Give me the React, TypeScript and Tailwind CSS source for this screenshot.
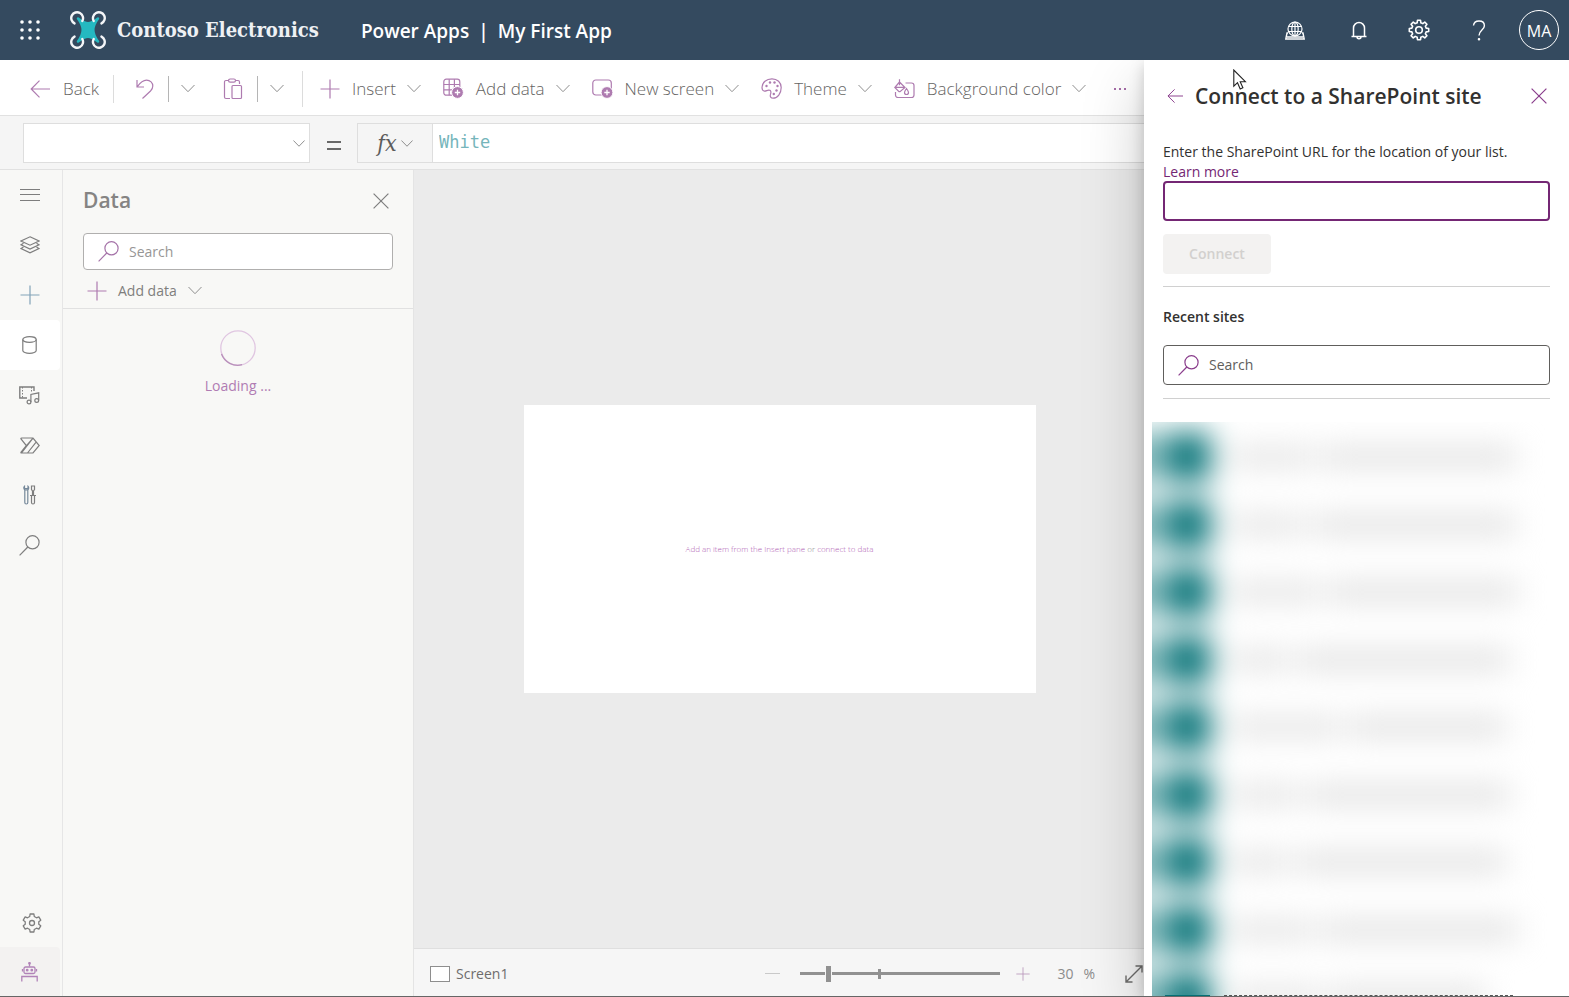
import React from "react";

type IconProps = { className?: string };

function Svg({ w, h, className = "", children }: { w: number; h: number; className?: string; children: React.ReactNode }) {
  return (
    <svg
      width={w}
      height={h}
      viewBox={`0 0 ${w} ${h}`}
      fill="none"
      stroke="currentColor"
      strokeWidth="1.2"
      className={`shrink-0 ${className}`}
      aria-hidden="true"
    >
      {children}
    </svg>
  );
}

const Chevron = ({ className }: IconProps) => (
  <Svg w={14} h={9} className={className}>
    <path d="M.5 1 7 7.700 13.500 1" strokeWidth="1" />
  </Svg>
);
const ArrowLeft = ({ className }: IconProps) => (
  <Svg w={20} h={18} className={className}>
    <path d="M20 9H1.200M9.500.7 1.200 9l8.300 8.300" />
  </Svg>
);
const Plus = ({ className }: IconProps) => (
  <Svg w={20} h={20} className={className}>
    <path d="M10 .5v19M.5 10h19" />
  </Svg>
);
const Close = ({ className }: IconProps) => (
  <Svg w={16} h={16} className={className}>
    <path d="m.6.6 14.800 14.800M15.400.6.6 15.400" />
  </Svg>
);
const Magnifier = ({ className }: IconProps) => (
  <Svg w={21} h={21} className={className}>
    <circle cx="13.500" cy="7.300" r="6.600" />
    <path d="M8.800 12 .6 20.300" />
  </Svg>
);
const Undo = () => (
  <Svg w={18} h={20} className="text-[#ae7bb0]">
    <path d="M1 1v7h7M1.300 7.700C4 4 6.500 1.200 10.500 1.200c3.800 0 6.300 2.600 6.300 5.800 0 2-.8 3.500-2.300 5L6.500 19.500" />
  </Svg>
);
const Paste = () => (
  <Svg w={20} h={22} className="text-[#ae7bb0]">
    <path d="M7 20.500H3a1.500 1.500 0 0 1-1.500-1.500V4A1.500 1.500 0 0 1 3 2.500h2.500M12.500 2.500H15A1.500 1.500 0 0 1 16.500 4v2" />
    <rect x="5.500" y="1" width="7" height="3.200" rx="1.600" />
    <rect x="9" y="7.500" width="9.500" height="13" rx="1" />
  </Svg>
);
const Badge = ({ x, y }: { x: number; y: number }) => (
  <g>
    <circle cx={x} cy={y} r="5.900" fill="currentColor" stroke="white" strokeWidth="1" />
    <path d={`M${x} ${y - 2.7}v5.400M${x - 2.7} ${y}h5.400`} stroke="white" strokeWidth="1.300" />
  </g>
);
const TableAdd = () => (
  <Svg w={21} h={21} className="text-[#ae7bb0]">
    <rect x=".8" y="1.200" width="16" height="16" rx="2.500" />
    <path d="M6.200 1.200v16M11.400 1.200v16M.8 6.500h16M.8 11.800h16" />
    <Badge x={14.5} y={14.5} />
  </Svg>
);
const ScreenAdd = () => (
  <Svg w={21} h={20} className="text-[#ae7bb0]">
    <rect x=".8" y="1" width="18.500" height="15" rx="3" />
    <Badge x={15} y={13.5} />
  </Svg>
);
const Palette = () => (
  <Svg w={21} h={21} className="text-[#ae7bb0]">
    <path d="M1 9.500C1 4.500 5.500.8 11 .8c5.300 0 9.200 3.700 9.200 8.700 0 6-3.700 10.700-8 10.700-2.400 0-3.400-1.700-2.700-3.800.7-2.300.6-3.900-1.200-4.200-2-.4-3.200 1.300-4.900.9C1.800 12.700 1 11.400 1 9.500z" />
    <g fill="currentColor" stroke="none">
      <circle cx="5.500" cy="8" r="1.200" />
      <circle cx="9" cy="4.500" r="1.200" />
      <circle cx="13.500" cy="4.500" r="1.200" />
      <circle cx="16.500" cy="8" r="1.200" />
      <circle cx="15.500" cy="12.500" r="1.200" />
      <circle cx="12.800" cy="16" r="1.200" />
    </g>
  </Svg>
);
const PaintFill = () => (
  <Svg w={21} h={20} className="text-[#ae7bb0]">
    <path d="M11.500 4h6a2.500 2.500 0 0 1 2.500 2.500V16a2.500 2.500 0 0 1-2.500 2.500H4A2.500 2.500 0 0 1 1.500 16v-3" />
    <path d="m5.500 3 5.500 5.500-5 4.200h-1L.8 8.500zM5.500.3v6M1 8.300h10" />
    <path d="M12.500 9.500c-1.600 2.300-2 3.200-2 4a2 2 0 0 0 4 0c0-.8-.4-1.700-2-4z" />
  </Svg>
);

const ROTOR = "M13.300 10A5.900 5.900 0 1 0 5.500 12.400";
const Logo = () => (
  <svg width="38" height="38" viewBox="0 0 38 38" fill="none" className="shrink-0" aria-hidden="true">
    <path
      d="M9 7.500c4 3 6 4.800 10 4.800s6-1.800 10-4.800c-3 4-4.700 7-4.700 11.500S26 26.500 29 30.500c-4-3-6-4.800-10-4.800s-6 1.800-10 4.800c3-4 4.700-7 4.700-11.500S12 11.500 9 7.500z"
      fill="#25b9c1"
      stroke="#25b9c1"
      strokeWidth="2.500"
      strokeLinejoin="round"
    />
    <g stroke="#f4f6f8" strokeWidth="2.400" strokeLinecap="round">
      <path d={ROTOR} />
      <path d={ROTOR} transform="matrix(-1 0 0 1 38 0)" />
      <path d={ROTOR} transform="matrix(1 0 0 -1 0 38)" />
      <path d={ROTOR} transform="matrix(-1 0 0 -1 38 38)" />
    </g>
  </svg>
);

const gearPath = (teeth: number, c: number, outer: number, inner: number) => {
  const pts: string[] = [];
  const step = (Math.PI * 2) / teeth;
  for (let i = 0; i < teeth; i++) {
    const a = i * step - Math.PI / 2;
    [
      [a - step * 0.32, inner],
      [a - step * 0.2, outer],
      [a + step * 0.2, outer],
      [a + step * 0.32, inner],
    ].forEach(([t, r]) => pts.push(`${(c + Math.cos(t) * r).toFixed(2)} ${(c + Math.sin(t) * r).toFixed(2)}`));
  }
  return `M${pts.join("L")}z`;
};

const GearEight = () => (
  <Svg w={22} h={22}>
    <path d={gearPath(8, 11, 9.8, 7.4)} strokeWidth="1.600" strokeLinejoin="round" />
    <circle cx="11" cy="11" r="3.300" strokeWidth="1.600" />
  </Svg>
);
const GearSix = () => (
  <Svg w={20} h={20}>
    <path d={gearPath(6, 10, 9.2, 6.9)} strokeWidth="1.300" strokeLinejoin="round" />
    <circle cx="10" cy="10" r="2.500" strokeWidth="1.300" />
  </Svg>
);
const Globe = () => (
  <Svg w={20} h={19}>
    <circle cx="10" cy="8" r="7" />
    <ellipse cx="10" cy="8" rx="3.200" ry="7" />
    <path d="M3.500 5.500h13M3.500 10.500h13M10 1v14" />
    <path d="M3 12H2L.8 18h18.400L18 12h-1M2 16h16" strokeWidth="1.400" />
  </Svg>
);
const Bell = () => (
  <Svg w={16} h={19}>
    <path d="M.5 15.500h15M2.500 15.500V7a5.500 5.500 0 0 1 11 0v8.500M6 15.800a2 2 0 0 0 4 0" strokeWidth="1.500" />
  </Svg>
);
const Question = () => (
  <Svg w={14} h={21}>
    <path d="M1.500 5.500C1.800 2.700 4 1 7 1c3.300 0 5.400 2 5.400 4.700C12.400 10 7 10.200 7 15.500" strokeWidth="1.400" />
    <circle cx="7" cy="19.200" r=".7" fill="currentColor" />
  </Svg>
);

const Menu = () => (
  <Svg w={20} h={12}>
    <path d="M0 .5h20M0 5.500h20M0 11.500h20" strokeWidth="1" />
  </Svg>
);
const Layers = () => (
  <Svg w={20} h={18}>
    <path d="M10 .8 19 5l-9 4.200L1 5z" />
    <path d="M3.500 7.200 1 8.800l9 4.200 9-4.200-2.500-1.600M3.500 11 1 12.600l9 4.200 9-4.200-2.500-1.600" />
  </Svg>
);
const Cylinder = () => (
  <Svg w={15} h={18}>
    <ellipse cx="7.500" cy="3.500" rx="6.700" ry="2.800" />
    <path d="M.8 3.500v11c0 1.500 3 2.800 6.700 2.800s6.700-1.300 6.700-2.800v-11" />
  </Svg>
);
const Media = () => (
  <Svg w={21} h={19}>
    <path d="M15 5V1H.8v11H8" strokeWidth="1.400" />
    <path d="M3.500 1v11M12.500 1v5" strokeWidth="1" strokeDasharray="1.500 1.500" />
    <circle cx="10" cy="16" r="1.900" />
    <circle cx="17.700" cy="14.500" r="1.900" />
    <path d="M11.900 16V8.500l7.800-1.700v7.700" />
  </Svg>
);
const Flow = () => (
  <Svg w={20} h={17}>
    <path d="M1.500 1h11.500l6.200 7.500-6.200 7.500H1.500q-1 0-.4-1L6.300 8.500 1 2q-.4-1 .5-1zM13 1.200 6.700 8.500M13 1.200 1.500 15.800M16.300 4.800 7.500 16" />
  </Svg>
);
const Tools = () => (
  <Svg w={13} h={20}>
    <path d="M1.800 5v12.500a1.500 1.500 0 0 0 3 0V5M1.500 1.200C.5 2 .5 4 1.800 5h3C6 4 6 2 5 1.200v2.500H1.500z" stroke="#76899a" />
    <path d="M8.500 1h3v3.500L10.500 6v4.500h-1V6l-1-1.500zM7 10.500h6M8.500 10.500v7a1.500 1.500 0 0 0 3 0v-7" />
  </Svg>
);
const Bot = () => (
  <Svg w={17} h={20}>
    <path d="M8.500 4.500V1" strokeWidth="1.300" />
    <circle cx="8.500" cy="1.300" r=".8" />
    <rect x="3" y="5" width="11" height="6.500" rx="1.500" strokeWidth="1.300" />
    <path d="M1.500 7v2.500M15.500 7v2.500M.8 19.500v-5h15.400v5" strokeWidth="1.300" />
    <circle cx="6.200" cy="8.200" r=".8" fill="currentColor" />
    <circle cx="10.800" cy="8.200" r=".8" fill="currentColor" />
  </Svg>
);
const Expand = () => (
  <Svg w={18} h={18}>
    <path d="M1 17 17 1M10.500 1H17v6.500M1 10.500V17h6.500" strokeWidth="1.400" />
  </Svg>
);

function ToolButton({ icon, label }: { icon: React.ReactNode; label: string }) {
  return (
    <button type="button" className="flex shrink-0 items-center gap-3">
      {icon}
      <span className="flex items-center gap-[11px] whitespace-nowrap">
        {label}
        <Chevron className="text-[#8f8f8f]" />
      </span>
    </button>
  );
}

function TopBar() {
  return (
    <header className="flex h-[60px] shrink-0 items-center bg-[#344a5f] text-white">
      <button type="button" aria-label="App launcher" className="ml-5">
        <svg width="20" height="20" viewBox="0 0 20 20" fill="currentColor" aria-hidden="true">
          {[2, 10, 18].map((y) => [2, 10, 18].map((x) => <circle key={`${x}-${y}`} cx={x} cy={y} r="1.800" />))}
        </svg>
      </button>
      <a href="#home" className="ml-[29px] flex items-center gap-[10px]">
        <Logo />
        <span className="font-['DejaVu_Serif_Condensed','DejaVu_Serif',serif] text-[20px] font-bold text-[#eef1f4]">
          Contoso Electronics
        </span>
      </a>
      <h1 className="ml-[42px] flex gap-[9px] pt-[2px] text-[19px] font-semibold">
        <span>Power Apps</span>
        <span>|</span>
        <span>My First App</span>
      </h1>
      <nav className="ml-auto mr-[10px] flex items-center">
        <button type="button" aria-label="Environment" className="flex w-16 justify-center"><Globe /></button>
        <button type="button" aria-label="Notifications" className="flex w-16 justify-center"><Bell /></button>
        <button type="button" aria-label="Settings" className="flex w-[56px] justify-center"><GearEight /></button>
        <button type="button" aria-label="Help" className="flex w-16 justify-center"><Question /></button>
        <button
          type="button"
          aria-label="Account"
          className="ml-2 flex size-10 items-center justify-center rounded-full border border-white pt-px text-base"
        >
          MA
        </button>
      </nav>
    </header>
  );
}

function Toolbar() {
  return (
    <div className="flex h-14 shrink-0 items-center overflow-hidden border-b border-[#e1e1e1] bg-white pt-[2px] text-[17px] font-light text-[#656463]">
      <button type="button" className="ml-[30px] flex items-center gap-[13px]">
        <ArrowLeft className="text-[#ae7bb0]" />
        Back
      </button>
      <span className="ml-[14px] h-7 w-px bg-[#dcdcdc]" />
      <button type="button" aria-label="Undo" className="ml-[22px]"><Undo /></button>
      <span className="ml-[14px] h-[26px] w-px bg-[#b5b5b5]" />
      <button type="button" aria-label="Undo options" className="ml-3"><Chevron className="text-[#8c8c8c]" /></button>
      <button type="button" aria-label="Paste" className="ml-[28px]"><Paste /></button>
      <span className="ml-[14px] h-[26px] w-px bg-[#b5b5b5]" />
      <button type="button" aria-label="Paste options" className="ml-3"><Chevron className="text-[#8c8c8c]" /></button>
      <span className="ml-[18px] h-[36px] w-px bg-[#dcdcdc]" />
      <div className="ml-[17px] flex items-center gap-[22px]">
        <ToolButton icon={<Plus className="text-[#ae7bb0]" />} label="Insert" />
        <ToolButton icon={<TableAdd />} label="Add data" />
        <ToolButton icon={<ScreenAdd />} label="New screen" />
        <ToolButton icon={<Palette />} label="Theme" />
        <ToolButton icon={<PaintFill />} label="Background color" />
      </div>
      <button type="button" aria-label="More" className="ml-7 flex gap-[3px]">
        <span className="size-[2px] bg-[#a56ca8]" />
        <span className="size-[2px] bg-[#a56ca8]" />
        <span className="size-[2px] bg-[#a56ca8]" />
      </button>
    </div>
  );
}

function FormulaBar() {
  return (
    <div className="flex h-[54px] shrink-0 items-center border-b border-[#e1e1e1] bg-[#f5f5f5] pt-px">
      <div className="relative ml-[23px] h-10 w-[287px]">
        <select aria-label="Property" className="size-full appearance-none border border-[#dedede] bg-white">
          <option></option>
        </select>
        <Chevron className="pointer-events-none absolute right-[5px] top-4 w-3 text-[#7c7c7c]" />
      </div>
      <span className="flex w-[47px] flex-col items-center gap-[5px] pt-1" role="img" aria-label="equals">
        <span className="h-[2px] w-[14px] bg-[#686868]" />
        <span className="h-[2px] w-[14px] bg-[#686868]" />
      </span>
      <button
        type="button"
        className="flex h-10 w-[75px] items-center justify-center gap-1 border border-r-0 border-[#dedede] font-['DejaVu_Serif_Condensed','Liberation_Serif',serif] text-[23px] leading-none italic text-[#5c5c5c]"
      >
        fx
        <Chevron className="w-3 text-[#7c7c7c]" />
      </button>
      <input
        aria-label="Formula"
        defaultValue="White"
        className="h-10 min-w-0 flex-1 border border-r-0 border-[#dedede] bg-white px-[6px] pb-[2px] font-['DejaVu_Sans_Mono',monospace] text-[17px] text-[#76b5bb] outline-none"
      />
    </div>
  );
}

const railItems = [
  { label: "Menu", icon: <Menu /> },
  { label: "Tree view", icon: <Layers /> },
  { label: "Insert", icon: <Plus className="text-[#82a3b8]" /> },
  { label: "Data", icon: <Cylinder />, active: true },
  { label: "Media", icon: <Media /> },
  { label: "Power Automate", icon: <Flow /> },
  { label: "Advanced tools", icon: <Tools /> },
  { label: "Search", icon: <Magnifier /> },
];

function Rail() {
  return (
    <nav className="flex w-[63px] shrink-0 flex-col border-r border-[#e6e6e6] text-[#7e7e7e]">
      {railItems.map((item) => (
        <button
          key={item.label}
          type="button"
          aria-label={item.label}
          className={`flex h-[50px] w-[60px] items-center justify-center rounded-r pr-px ${item.active ? "bg-white" : ""}`}
        >
          {item.icon}
        </button>
      ))}
      <button type="button" aria-label="Settings" className="mt-auto flex h-12 w-[63px] items-center justify-center">
        <GearSix />
      </button>
      <button
        type="button"
        aria-label="Virtual agent"
        className="flex h-[49px] w-[60px] items-center justify-center rounded-tr bg-[#f3f2f1] pr-px text-[#b183b8]"
      >
        <Bot />
      </button>
    </nav>
  );
}

function DataPane() {
  return (
    <section className="flex w-[351px] shrink-0 flex-col border-r border-[#e4e4e4]">
      <div className="border-b border-[#e1e1e1] px-5">
        <div className="flex h-[63px] items-center justify-between pr-1 pb-px">
          <h2 className="text-[21px] font-semibold text-[#858483]">Data</h2>
          <button type="button" aria-label="Close" className="text-[#7e7e7e]"><Close /></button>
        </div>
        <label className="flex h-[37px] items-center gap-[10px] rounded-sm border border-[#b0afae] bg-white pl-[14px]">
          <Magnifier className="text-[#a573a8]" />
          <input
            type="text"
            aria-label="Search data"
            placeholder="Search"
            className="min-w-0 flex-1 bg-transparent text-sm text-[#858483] outline-none placeholder:text-[#979695]"
          />
        </label>
        <button type="button" className="flex h-[38px] items-center gap-[11px] pt-[3px] pl-1 text-sm text-[#7f7e7d]">
          <Plus className="text-[#ae7bb0]" />
          Add data
          <Chevron className="text-[#8f8f8f]" />
        </button>
      </div>
      <div className="flex flex-col items-center pt-[21px] text-[#b07cb3]">
        <svg width="36" height="36" viewBox="0 0 36 36" fill="none" aria-hidden="true">
          <circle cx="18" cy="18" r="17.200" stroke="#e0c6e1" strokeWidth="1.300" />
          <path d="M1.500 24A17.200 17.200 0 0 0 22 34.700" stroke="#b890ba" strokeWidth="1.300" />
        </svg>
        <p className="mt-[10px] text-sm">Loading ...</p>
      </div>
    </section>
  );
}

function StatusBar() {
  return (
    <footer className="flex h-[48px] shrink-0 items-center overflow-hidden border-t border-[#dfdfdf] bg-[#f6f6f6] pt-[2px] text-sm text-[#6e6d6c]">
      <span className="ml-4 h-4 w-5 border border-[#8e8e8e] bg-white" />
      <span className="ml-[6px]">Screen1</span>
      <button type="button" aria-label="Zoom out" className="ml-auto flex h-5 w-[15px] items-center">
        <span className="h-px w-full bg-[#c9c9c9]" />
      </button>
      <div className="relative ml-5 flex h-5 w-[200px] items-center">
        <input
          type="range"
          aria-label="Zoom"
          min={0}
          max={100}
          defaultValue={13}
          className="h-[3px] w-full appearance-none bg-[#919191] [&::-webkit-slider-thumb]:h-[18px] [&::-webkit-slider-thumb]:w-[7px] [&::-webkit-slider-thumb]:appearance-none [&::-webkit-slider-thumb]:border [&::-webkit-slider-thumb]:border-[#f6f6f6] [&::-webkit-slider-thumb]:bg-[#919191]"
        />
        <span className="pointer-events-none absolute left-[78px] top-[5px] h-[10px] w-[3px] bg-[#919191]" />
      </div>
      <button type="button" aria-label="Zoom in" className="ml-4">
        <Plus className="w-[14px] text-[#b896ba]" />
      </button>
      <span className="ml-[27px] flex gap-[10px] text-[#8c8c8c]"><span>30</span><span>%</span></span>
      <button type="button" aria-label="Fit to window" className="ml-[30px] mr-px"><Expand /></button>
    </footer>
  );
}

const recentRows = [
  ["w-[84px]", "w-[194px]"],
  ["w-[76px]", "w-[202px]"],
  ["w-[90px]", "w-[190px]"],
  ["w-[60px]", "w-[212px]"],
  ["w-[110px]", "w-[158px]"],
  ["w-[70px]", "w-[202px]"],
  ["w-[60px]", "w-[208px]"],
  ["w-[84px]", "w-[196px]"],
  ["w-[90px]", "w-[158px]"],
];

function RecentSites() {
  return (
    <div className="relative ml-[8px] mt-[23px] min-h-0 flex-1 overflow-hidden">
      <ul className="pt-px blur-[15px]">
        {recentRows.map(([a, b], i) => (
          <li key={i} className="flex items-center odd:h-[68px] even:h-[67px]">
            <span className="-ml-10 h-12 w-[58px] shrink-0 bg-[#037176]/50" />
            <span className="h-12 w-10 shrink-0 bg-[#037176]" />
            <span className={`ml-5 h-5 shrink-0 bg-[#e3e3e3] ${a}`} />
            <span className={`ml-2 h-5 shrink-0 bg-[#e0e0e0] ${b}`} />
          </li>
        ))}
      </ul>
      <div className="absolute bottom-0 left-[13px] h-px w-[45px] bg-[#037176]" />
      <div className="absolute bottom-0 left-[72px] right-[56px] border-b border-dashed border-[#555]" />
    </div>
  );
}

function ConnectPanel() {
  return (
    <aside className="relative z-10 flex w-[425px] shrink-0 flex-col bg-white text-sm text-[#323130] shadow-[0_26px_58px_0_rgba(0,0,0,0.22),0_5px_14px_0_rgba(0,0,0,0.18)]">
      <div className="flex flex-col px-[19px]">
        <div className="mt-[14px] flex h-[44px] items-center pl-1">
          <button type="button" aria-label="Back" className="text-[#8a3d8c]"><ArrowLeft className="w-4" /></button>
          <h2 className="ml-3 whitespace-nowrap text-[21px] font-semibold">Connect to a SharePoint site</h2>
          <button type="button" aria-label="Close panel" className="ml-auto mr-[3px] text-[#8a3d8c]"><Close /></button>
        </div>
        <label htmlFor="site-url" className="mt-6 leading-5">
          Enter the SharePoint URL for the location of your list.
        </label>
        <a href="#learn" className="-mb-px self-start leading-5 text-[#742774]">Learn more</a>
        <input id="site-url" type="text" autoFocus className="h-10 rounded-sm border-2 border-[#742774] px-2 outline-none" />
        <button
          type="button"
          disabled
          className="mt-[13px] h-10 w-[108px] rounded-sm bg-[#f3f2f1] font-semibold text-[#d2d0ce]"
        >
          Connect
        </button>
        <hr className="mt-3 border-[#d0d0d0]" />
        <h3 className="mt-5 leading-5 font-semibold">Recent sites</h3>
        <label className="mt-[18px] flex h-10 items-center gap-[10px] rounded-sm border border-[#605e5c] pl-[14px]">
          <Magnifier className="text-[#8a3d8c]" />
          <input
            type="text"
            aria-label="Search recent sites"
            placeholder="Search"
            className="min-w-0 flex-1 outline-none placeholder:text-[#605e5c]"
          />
        </label>
        <hr className="mt-[13px] border-[#d0d0d0]" />
      </div>
      <RecentSites />
    </aside>
  );
}

export default function App() {
  return (
    <div className="relative flex h-screen flex-col overflow-hidden border-b border-[#666] bg-white font-['Open_Sans','Noto_Sans',sans-serif]">
      <TopBar />
      <div className="flex min-h-0 flex-1 overflow-hidden">
        <main className="flex min-w-0 flex-1 flex-col">
          <Toolbar />
          <FormulaBar />
          <div className="flex min-h-0 flex-1 bg-[#f8f8f6]">
            <Rail />
            <DataPane />
            <div className="flex min-w-0 flex-1 flex-col">
              <div className="flex min-h-0 flex-1 items-center justify-center bg-[#ebebeb] pb-5 pl-px">
                <div className="flex aspect-video w-[512px] items-center justify-center bg-white text-[8px] text-[#8c8c8c]">
                  <p className="whitespace-nowrap font-light">
                    <a href="#insert" className="text-[#b060b4]">Add an item from the Insert pane</a> or{" "}
                    <a href="#connect" className="text-[#b060b4]">connect to data</a>
                  </p>
                </div>
              </div>
              <StatusBar />
            </div>
          </div>
        </main>
        <ConnectPanel />
      </div>
      <svg width="14" height="21" viewBox="0 0 14 21" className="absolute left-[1233px] top-[69px] z-20" aria-hidden="true">
        <path
          d="M.8 1v16.200l3.700-3.500 2.700 6.200 2.700-1.200-2.700-6h5.200z"
          fill="white"
          stroke="#222"
          strokeWidth="1.100"
        />
      </svg>
    </div>
  );
}
